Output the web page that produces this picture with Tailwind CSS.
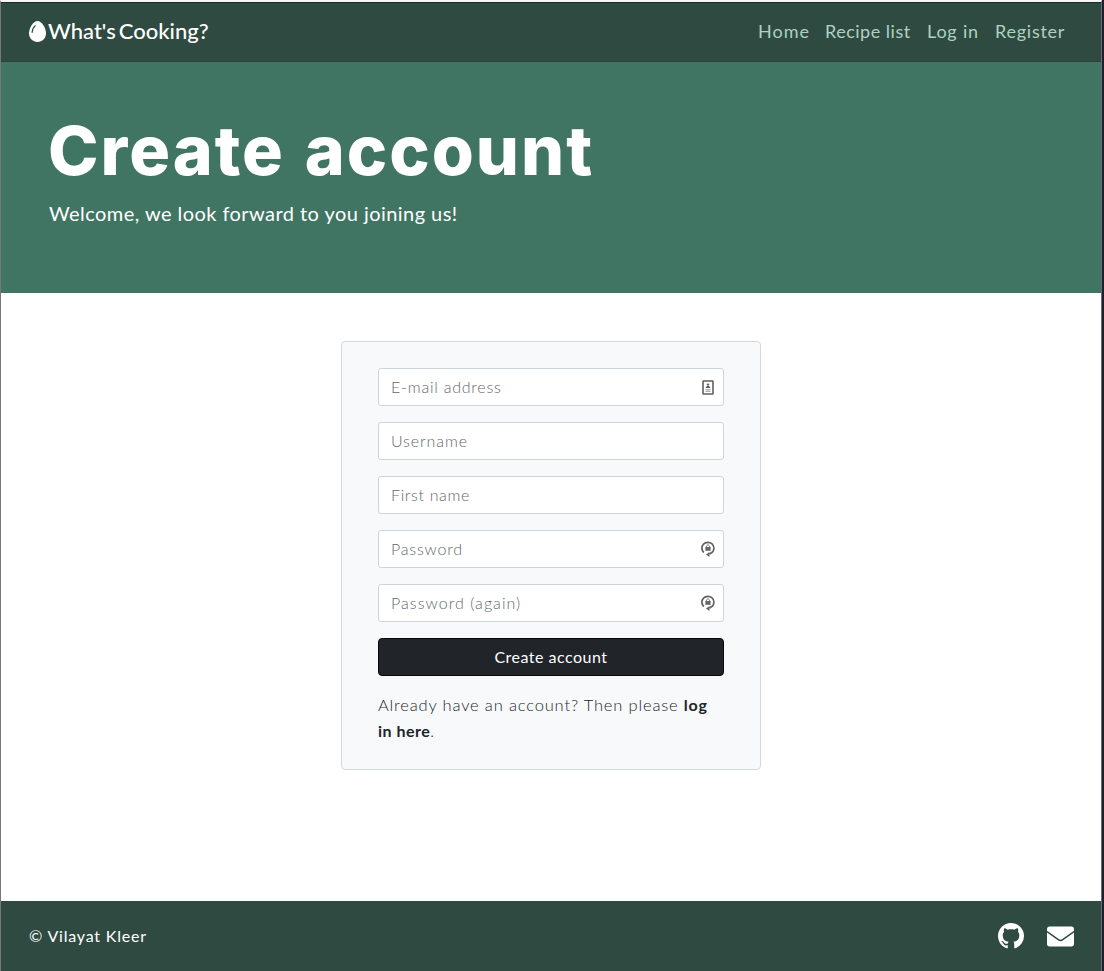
<!DOCTYPE html>
<html lang="en">
<head>
<meta charset="utf-8">
<title>What's Cooking? - Create account</title>
<script src="https://cdn.jsdelivr.net/npm/@tailwindcss/browser@4"></script>
</head>
<body class="h-[971px] overflow-hidden bg-[#202126] font-['Lato',sans-serif] text-[#212529]">
<div class="flex h-full w-[1102px] flex-col border-t-2 border-r border-l border-t-[#f7f6f9] border-r-[#6d6a72] border-l-[#777777] bg-white">
  <nav class="flex h-[60px] shrink-0 items-center justify-between border-t border-b border-t-[#142c24] border-b-[#29443a] bg-[#2f4b41] pr-9 pb-[2px] pl-7">
    <a class="flex items-center gap-[2px] whitespace-nowrap text-white">
      <svg class="h-[21px] w-[17px]" viewBox="0 0 18 21" preserveAspectRatio="none"><path fill="#fff" d="M9 0C13.500 0 18 7 18 12.300C18 17.500 14 21 9 21S0 17.500 0 12.300C0 7 4.500 0 9 0Z"/><path d="M3.300 11.500C3.500 8.500 4.800 6.200 6.600 4.800" fill="none" stroke="#2f4b41" stroke-width="1.200" stroke-linecap="round"/></svg>
      <span class="text-[22px] leading-7 font-medium tracking-[0px] [word-spacing:-2.5px]">What's Cooking?</span>
    </a>
    <div class="flex gap-4 text-lg whitespace-nowrap text-[#aed1c3]">
      <a class="w-[52px] pl-px tracking-[1px]">Home</a>
      <a class="w-[86px] tracking-[0.5px]">Recipe list</a>
      <a class="w-[52px] tracking-[0.8px]">Log in</a>
      <a class="w-[70px] tracking-[0.75px]">Register</a>
    </div>
  </nav>
  <header class="h-[231px] shrink-0 bg-[#407563] pt-[45px] pl-[47px] whitespace-nowrap text-white">
    <h1 class="font-['Inter',sans-serif] text-[68px] leading-[86px] font-extrabold tracking-[2px] [word-spacing:3px]">Create account</h1>
    <p class="mt-[5px] pl-px text-xl leading-[30px] tracking-[0.45px]">Welcome, we look forward to you joining us!</p>
  </header>
  <main class="flex grow justify-center pt-12">
    <form class="flex h-[429px] w-[420px] flex-col gap-4 rounded border border-[#d5d9dd] bg-[#f8f9fb] px-9 pt-[26px]">
      <div class="flex h-[38px] shrink-0 items-center justify-between rounded-[3px] border border-[#ced4da] bg-white pr-[9px] pl-3 font-light text-[#62686e]">
        <span class="tracking-[0.77px]">E-mail address</span>
        <svg class="h-[15px] w-3" viewBox="0 0 12 15"><rect x="1" y="1" width="10" height="13" rx=".5" fill="#fff" stroke="#5f5f5f" stroke-width="1.600"/><circle cx="6" cy="4.600" r="1.200" fill="#666"/><path d="M3.800 8V7.200Q6 4.900 8.200 7.200V8Z" fill="#555"/><path d="M3.500 9.700H8.500M3.500 11.300H8.500" stroke="#999"/></svg>
      </div>
      <div class="flex h-[38px] shrink-0 items-center rounded-[3px] border border-[#ced4da] bg-white pl-3 font-light text-[#62686e]"><span class="tracking-[0.9px]">Username</span></div>
      <div class="flex h-[38px] shrink-0 items-center rounded-[3px] border border-[#ced4da] bg-white pl-3 font-light text-[#62686e]"><span class="tracking-[0.65px]">First name</span></div>
      <div class="flex h-[38px] shrink-0 items-center justify-between rounded-[3px] border border-[#ced4da] bg-white pr-2 pl-3 font-light text-[#62686e]">
        <span class="tracking-[0.8px]">Password</span>
        <svg class="h-4 w-[14px]" viewBox="0 0 14 16"><path d="M2.800 11.500A6 5.900 0 1 1 11.200 11.300L8.500 13" fill="none" stroke="#626262" stroke-width="1.700"/><path d="M8.500 11V16L5 13.500Z" fill="#626262"/><path d="M5.400 6.500V5Q7 2.200 8.600 5V6.500" fill="none" stroke="#777"/><rect x="4.400" y="6" width="5.200" height="3.800" fill="#666"/></svg>
      </div>
      <div class="flex h-[38px] shrink-0 items-center justify-between rounded-[3px] border border-[#ced4da] bg-white pr-2 pl-3 font-light text-[#62686e]">
        <span class="tracking-[1.05px]">Password (again)</span>
        <svg class="h-4 w-[14px]" viewBox="0 0 14 16"><path d="M2.800 11.500A6 5.900 0 1 1 11.200 11.300L8.500 13" fill="none" stroke="#626262" stroke-width="1.700"/><path d="M8.500 11V16L5 13.500Z" fill="#626262"/><path d="M5.400 6.500V5Q7 2.200 8.600 5V6.500" fill="none" stroke="#777"/><rect x="4.400" y="6" width="5.200" height="3.800" fill="#666"/></svg>
      </div>
      <button type="button" class="h-[38px] shrink-0 rounded border border-[#08090b] bg-[#212429] text-white"><span class="tracking-[0.5px]">Create account</span></button>
      <p class="leading-[26px] font-light whitespace-nowrap"><span class="text-[16.5px] tracking-[0.84px]">Already have an account? Then please </span><b class="font-bold tracking-[0.8px]">log</b><br><b class="font-bold tracking-[0.5px]">in here</b>.</p>
    </form>
  </main>
  <footer class="flex h-[70px] shrink-0 items-center justify-between bg-[#2f4b41] pr-[27px] pl-7 text-white">
    <span class="tracking-[0.8px]">© Vilayat Kleer</span>
    <div class="flex items-center gap-[23px]">
      <svg class="h-[26px] w-[26px]" viewBox="0 0 16 16" fill="#fff"><path d="M8 0C3.580 0 0 3.580 0 8c0 3.540 2.290 6.530 5.470 7.590.4.070.55-.17.55-.38 0-.19-.01-.82-.01-1.490-2.010.37-2.530-.49-2.690-.94-.09-.23-.48-.94-.82-1.130-.28-.15-.68-.52-.01-.53.63-.01 1.080.58 1.230.82.72 1.210 1.870.87 2.330.66.070-.52.28-.87.510-1.070-1.780-.2-3.640-.89-3.640-3.950 0-.87.310-1.590.82-2.150-.08-.2-.36-1.020.08-2.120 0 0 .67-.21 2.200.82.64-.18 1.320-.27 2-.27s1.360.09 2 .27c1.530-1.040 2.200-.82 2.200-.82.44 1.100.16 1.920.08 2.120.51.560.82 1.270.82 2.150 0 3.070-1.870 3.750-3.650 3.950.29.25.54.73.54 1.480 0 1.070-.01 1.930-.01 2.200 0 .21.15.46.55.38A8.010 8.010 0 0 0 16 8c0-4.420-3.580-8-8-8Z"/></svg>
      <svg class="h-[21px] w-[27px]" viewBox="0 0 27 21"><rect y=".5" width="27" height="20" rx="2.700" fill="#fff"/><path d="M0 5.500L11.300 13.600Q13.500 15.200 15.700 13.600L27 5.500" fill="none" stroke="#2f4b41" stroke-width="1.500"/></svg>
    </div>
  </footer>
</div>
</body>
</html>
